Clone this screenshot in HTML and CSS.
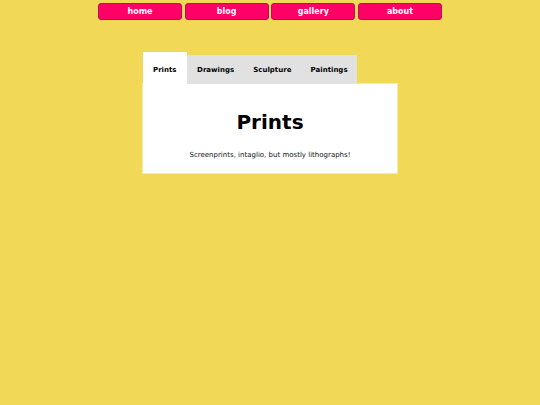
FILE: index.html
```html
<!DOCTYPE html>
<html>
<head>
<meta charset="utf-8">
<link rel="stylesheet" href="styles.css">
</head>
<body>
<nav class="nav">
  <a class="nav-btn" href="#">home</a>
  <a class="nav-btn" href="#">blog</a>
  <a class="nav-btn" href="#">gallery</a>
  <a class="nav-btn" href="#">about</a>
</nav>
<main class="tabs">
  <div class="tab-row">
    <div class="tab active">Prints</div>
    <div class="tab">Drawings</div>
    <div class="tab">Sculpture</div>
    <div class="tab">Paintings</div>
  </div>
  <section class="panel">
    <h1 class="panel-title">Prints</h1>
    <p class="panel-text">Screenprints, intaglio, but mostly lithographs!</p>
  </section>
</main>
</body>
</html>
```
FILE: styles.css
```css
html, body {
  margin: 0;
  padding: 0;
}
body {
  background: #f1d957;
  font-family: "DejaVu Sans", Verdana, sans-serif;
  width: 540px;
  height: 405px;
}
.nav {
  display: flex;
  justify-content: center;
  gap: 2.67px;
  padding-top: 3px;
}
.nav-btn {
  box-sizing: border-box;
  width: 84px;
  height: 17px;
  background: #ff0066;
  border: 1px solid #b3105e;
  border-radius: 3px;
  color: #fff;
  font-weight: bold;
  font-size: 8px;
  text-decoration: none;
  display: flex;
  align-items: center;
  justify-content: center;
}
.tabs {
  width: 254px;
  margin: 32px auto 0 143px;
}
.tab-row {
  display: flex;
  align-items: flex-end;
}
.tab {
  box-sizing: border-box;
  background: #e1e1e1;
  height: 29px;
  font-size: 7px;
  font-weight: bold;
  display: flex;
  align-items: center;
  justify-content: center;
  padding: 0 9.6px;
  color: #000;
}
.tab.active {
  background: #fff;
  height: 32px;
  padding: 3px 11px 0 10px;
}
.panel {
  background: #fff;
  height: 89px;
  text-align: center;
  box-shadow: 0 0 0 1px #f6eaa8;
  overflow: hidden;
}
.panel-title {
  margin: 0;
  padding-top: 24px;
  font-size: 20px;
  font-weight: bold;
  line-height: 28px;
}
.panel-text {
  margin: 15px 0 0;
  font-size: 7px;
  color: #111;
}
```
